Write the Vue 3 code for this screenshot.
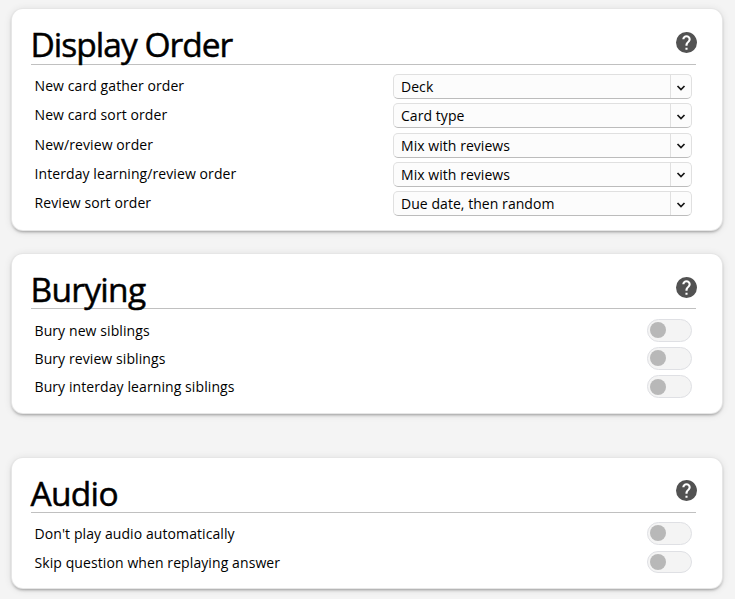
<script setup>
const sections = [
  {
    id: 'display', title: 'Display Order',
    rows: [
      { label: 'New card gather order', value: 'Deck' },
      { label: 'New card sort order', value: 'Card type' },
      { label: 'New/review order', value: 'Mix with reviews' },
      { label: 'Interday learning/review order', value: 'Mix with reviews' },
      { label: 'Review sort order', value: 'Due date, then random' },
    ],
  },
  {
    id: 'burying', title: 'Burying',
    rows: [
      { label: 'Bury new siblings' },
      { label: 'Bury review siblings' },
      { label: 'Bury interday learning siblings' },
    ],
  },
  {
    id: 'audio', title: 'Audio',
    rows: [
      { label: "Don't play audio automatically" },
      { label: 'Skip question when replaying answer' },
    ],
  },
]
</script>

<template>
  <main class="page">
    <section v-for="s in sections" :key="s.id" class="card" :class="s.id">
      <header class="head">
        <h1 class="title">{{ s.title }}</h1>
        <svg class="help" viewBox="2 2 20 20">
          <path d="M15.07,11.25L14.17,12.17C13.45,12.89 13,13.5 13,15H11V14.5C11,13.39 11.45,12.39 12.17,11.67L13.41,10.41C13.78,10.05 14,9.55 14,9C14,7.89 13.1,7 12,7A2,2 0 0,0 10,9H8A4,4 0 0,1 12,5A4,4 0 0,1 16,9C16,9.88 15.64,10.67 15.07,11.25M13,19H11V17H13M12,2A10,10 0 0,0 2,12A10,10 0 0,0 12,22A10,10 0 0,0 22,12C22,6.47 17.5,2 12,2Z" />
        </svg>
      </header>
      <div class="rows">
        <div v-for="r in s.rows" :key="r.label" class="row">
          <span class="label">{{ r.label }}</span>
          <div v-if="r.value" class="select">
            <span class="value">{{ r.value }}</span>
            <span class="arrow">
              <svg viewBox="0 0 10 8"><path d="M1.5 2 L5 5.5 L8.5 2" /></svg>
            </span>
          </div>
          <span v-else class="switch"><i class="knob"></i></span>
        </div>
      </div>
    </section>
  </main>
</template>

<style>
body { background: #f4f4f4; }
</style>

<style scoped>
.page {
  box-sizing: border-box;
  height: 599px;
  padding: 9px 13px 0 12px;
  overflow: hidden;
  background: #f4f4f4;
  color: #000;
  font-family: "Open Sans", "Noto Sans", sans-serif;
}
.card {
  box-sizing: border-box;
  padding: 0 26px 0 19px;
  border-radius: 11px;
  background: #fff;
  box-shadow: 0 0 0 1px #e6e6e6, 0 2px 3px rgba(0, 0, 0, .32), 0 1px 8px rgba(0, 0, 0, .12);
}
.display { height: 221px; margin-bottom: 24px; }
.burying { height: 159px; margin-bottom: 45px; }
.audio { height: 130px; }
.head {
  box-sizing: border-box;
  display: flex;
  justify-content: space-between;
  height: 55px;
  margin-bottom: 9px;
  border-bottom: 1px solid #c0c0c0;
}
.display .head { height: 56px; }
.burying .head { margin-bottom: 10px; }
.title {
  margin: 13px 0 0 -0.5px;
  font-size: 33.5px;
  line-height: 44px;
  font-weight: 500;
  letter-spacing: -0.7px;
  white-space: nowrap;
  -webkit-text-stroke: 0.5px #000;
}
.display .title { letter-spacing: -0.98px; }
.help {
  width: 21px;
  height: 21px;
  margin: 23px -1px 0 0;
  fill: #525252;
}
.audio .help { margin-top: 22px; }
.rows { padding: 0 4px 0 3.5px; }
.row {
  display: flex;
  align-items: flex-start;
  justify-content: space-between;
  height: 28.2px;
}
.display .row { height: 29.25px; }
.audio .row { height: 28.6px; }
.label, .value {
  font-size: 14px;
  line-height: 24px;
  letter-spacing: 0.09px;
  white-space: nowrap;
}
.select {
  box-sizing: border-box;
  display: flex;
  width: 299px;
  height: 25px;
  border: 1px solid #e0e0e0;
  border-bottom-color: #bcbcbc;
  border-radius: 5px;
  background: #fcfcfc;
}
.value { flex: 1; padding-left: 7px; letter-spacing: 0.05px; }
.arrow {
  display: flex;
  align-items: center;
  justify-content: center;
  width: 20px;
  padding-top: 2px;
  border-left: 1px solid #e0e0e0;
}
.arrow svg {
  width: 10px;
  height: 8px;
  fill: none;
  stroke: #161616;
  stroke-width: 1.7;
}
.switch {
  box-sizing: border-box;
  display: flex;
  align-items: center;
  width: 45px;
  height: 22.5px;
  padding-left: 2px;
  border: 1px solid #dfe0e4;
  border-radius: 12px;
  background: #f4f4f4;
}
.knob {
  width: 16px;
  height: 16px;
  border-radius: 50%;
  background: #b8b8b8;
}
</style>
